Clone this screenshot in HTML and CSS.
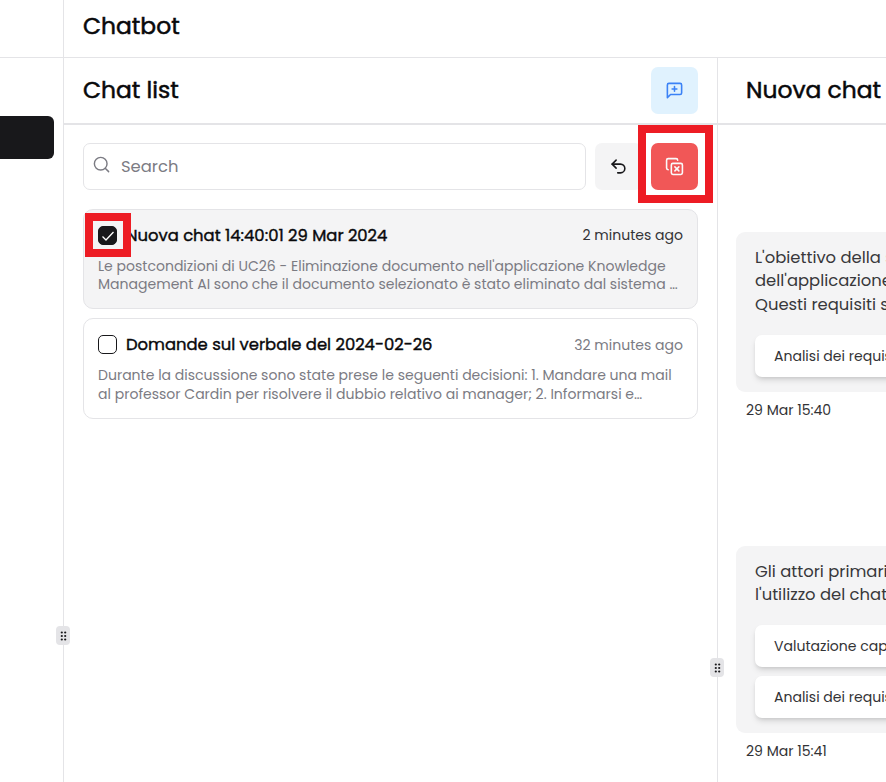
FILE: index.html
```
<!DOCTYPE html>
<html lang="it">
<head>
<meta charset="utf-8">
<title>Chatbot</title>
<link rel="stylesheet" href="styles.css">
</head>
<body>
<div class="app">
  <aside class="sidebar">
    <div class="sidebar-top"></div>
    <div class="nav-active"></div>
    <span class="handle handle-side"><svg width="7" height="10" viewBox="0 0 7 10"><g fill="#18181b"><circle cx="1.8" cy="1.5" r="1.1"/><circle cx="5.2" cy="1.5" r="1.1"/><circle cx="1.8" cy="5" r="1.1"/><circle cx="5.2" cy="5" r="1.1"/><circle cx="1.8" cy="8.5" r="1.1"/><circle cx="5.2" cy="8.5" r="1.1"/></g></svg></span>
  </aside>
  <main class="main">
    <header class="topbar"><h1 class="heading">Chatbot</h1></header>
    <div class="panels">
      <section class="list-panel">
        <div class="panel-head">
          <h2 class="heading">Chat list</h2>
          <button class="btn btn-new"><svg class="icon" viewBox="0 0 24 24"><path d="M21 15a2 2 0 0 1-2 2H7l-4 4V5a2 2 0 0 1 2-2h14a2 2 0 0 1 2 2z"/><path d="M12 7v6M9 10h6"/></svg></button>
        </div>
        <div class="list-body">
          <div class="tools">
            <div class="search"><svg class="icon" viewBox="0 0 24 24"><circle cx="11" cy="11" r="8"/><path d="m21 21-4.3-4.3"/></svg><span>Search</span></div>
            <button class="btn btn-undo"><svg class="icon" viewBox="0 0 24 24"><path d="M9 14 4 9l5-5"/><path d="M4 9h10.500a5.500 5.500 0 0 1 0 11H11"/></svg></button>
            <div class="marked">
              <button class="btn btn-delete"><svg class="icon" viewBox="0 0 24 24"><path d="m12.500 12.500 5 5M12.500 17.500l5-5"/><rect x="8" y="8" width="14" height="14" rx="2"/><path d="M4 16c-1.100 0-2-.9-2-2V4c0-1.100.9-2 2-2h10c1.100 0 2 .9 2 2"/></svg></button>
              <span class="frame frame-delete"></span>
            </div>
          </div>
          <article class="card selected">
            <div class="card-head">
              <div class="marked">
                <span class="check on"><svg width="14" height="14" viewBox="0 0 14 14"><path d="M1.500 7.500 5 11 12.500 3" fill="none" stroke="#fff" stroke-width="1.300"/></svg></span>
                <span class="frame frame-check"></span>
              </div>
              <h3 class="title">Nuova chat 14:40:01 29 Mar 2024</h3>
              <time class="date">2 minutes ago</time>
            </div>
            <p class="desc">Le postcondizioni di UC26 - Eliminazione documento nell'applicazione Knowledge<br>Management AI sono che il documento selezionato è stato eliminato dal sistema …</p>
          </article>
          <article class="card">
            <div class="card-head">
              <span class="check"></span>
              <h3 class="title">Domande sul verbale del 2024-02-26</h3>
              <time class="date">32 minutes ago</time>
            </div>
            <p class="desc">Durante la discussione sono state prese le seguenti decisioni: 1. Mandare una mail<br>al professor Cardin per risolvere il dubbio relativo ai manager; 2. Informarsi e…</p>
          </article>
        </div>
        <span class="handle handle-list"><svg width="7" height="10" viewBox="0 0 7 10"><g fill="#18181b"><circle cx="1.8" cy="1.5" r="1.1"/><circle cx="5.2" cy="1.5" r="1.1"/><circle cx="1.8" cy="5" r="1.1"/><circle cx="5.2" cy="5" r="1.1"/><circle cx="1.8" cy="8.5" r="1.1"/><circle cx="5.2" cy="8.5" r="1.1"/></g></svg></span>
      </section>
      <section class="chat-panel">
        <div class="panel-head chat-head"><h2 class="heading">Nuova chat</h2></div>
        <div class="messages">
          <div class="message">
            <div class="bubble">
              <p class="text">L'obiettivo della s<br>dell'applicazione<br>Questi requisiti s</p>
              <div class="source">Analisi dei requis</div>
            </div>
            <time class="stamp">29 Mar 15:40</time>
          </div>
          <div class="message">
            <div class="bubble">
              <p class="text">Gli attori primari<br>l'utilizzo del chat</p>
              <div class="source">Valutazione cap</div>
              <div class="source">Analisi dei requis</div>
            </div>
            <time class="stamp">29 Mar 15:41</time>
          </div>
        </div>
      </section>
    </div>
  </main>
</div>
</body>
</html>
```
FILE: styles.css
```
* { box-sizing: border-box; }
body { margin: 0; height: 782px; overflow: hidden; background: #fff; color: #09090b; font-family: Poppins, Inter, "Open Sans", sans-serif; }
h1, h2, h3, p { margin: 0; }
.app { display: flex; height: 782px; width: 886px; overflow: hidden; }
.sidebar { position: relative; flex: 0 0 64px; border-right: 1px solid #e4e4e7; }
.sidebar-top { height: 58px; border-bottom: 1px solid #e4e4e7; }
.nav-active { height: 43px; width: 54px; margin-top: 58px; background: #18181b; border-radius: 0 6px 6px 0; }
.main { flex: 1; min-width: 0; display: flex; flex-direction: column; }
.topbar { height: 58px; padding: 0 19px 4px; border-bottom: 1px solid #e4e4e7; display: flex; align-items: center; }
.heading { font-size: 23.4px; line-height: 32px; padding-bottom: 2px; font-weight: 400; -webkit-text-stroke: .5px currentColor; white-space: nowrap; }
.panels { flex: 1; display: flex; min-height: 0; }
.list-panel { position: relative; flex: 0 0 654px; width: 654px; min-width: 0; border-right: 1px solid #e4e4e7; }
.panel-head { height: 67px; padding: 0 19px; border-bottom: 2px solid #e4e4e7; display: flex; align-items: center; justify-content: space-between; }
.btn { flex: none; width: 47px; height: 47px; padding: 0; border: 0; border-radius: 7px; display: flex; align-items: center; justify-content: center; }
.icon { flex: none; width: 19px; height: 19px; fill: none; stroke: currentColor; stroke-width: 2; stroke-linecap: round; stroke-linejoin: round; }
.btn-new { background: #e0f2fe; color: #3b82f6; }
.btn-undo { background: #f4f4f5; color: #18181b; }
.btn-delete { background: #f15757; color: #fafafa; }
.list-body { padding: 18px 19px; }
.tools { display: flex; gap: 9px; margin-bottom: 19px; }
.search { flex: 1; height: 47px; border: 1px solid #e4e4e7; border-radius: 7px; display: flex; align-items: center; padding-left: 8px; gap: 10px; color: #7b7b83; font-size: 16.4px; }
.search .icon { margin-top: -4px; stroke-width: 1.8; }
.marked { position: relative; display: flex; }
.frame { position: absolute; border: 8px solid #ed1c24; z-index: 2; }
.frame-delete { left: -13px; top: -18px; width: 75px; height: 78px; }
.frame-check { left: -13px; top: -13px; width: 46px; height: 44px; }
.card { height: 100px; border: 1px solid #e4e4e7; border-radius: 10px; padding: 15px 14px; margin-bottom: 9px; }
.card + .card { height: 101px; }
.selected { background: #f4f4f5; }
.card-head { display: flex; align-items: center; height: 21px; }
.check { width: 19px; height: 19px; border: 1px solid #18181b; border-radius: 5px; flex: none; display: flex; align-items: center; justify-content: center; }
.on { background: #18181b; }
.title { font-size: 16.4px; line-height: 21px; font-weight: 400; -webkit-text-stroke: .4px currentColor; margin-left: 9px; white-space: nowrap; }
.date { margin-left: auto; font-size: 14.04px; color: #7b7b83; white-space: nowrap; }
.card:not(.selected) .date { padding-top: 1px; }
.selected .date { color: #333336; }
.desc { margin-top: 11px; font-size: 14.04px; line-height: 18.5px; color: #7b7b83; white-space: nowrap; }
.selected .desc { line-height: 18.2px; }
.handle { position: absolute; width: 14px; height: 19px; border-radius: 4px; background: #e4e4e7; display: flex; align-items: center; justify-content: center; z-index: 1; }
.handle-side { right: -7px; top: 626px; }
.handle-list { right: -7px; top: 600px; }
.chat-panel { flex: 1; min-width: 0; overflow: hidden; }
.chat-head { padding-right: 0; padding-left: 28px; }
.messages { padding: 107px 0 0 18px; }
.message + .message { margin-top: 126px; }
.bubble { margin-right: -30px; padding: 14px 19px 15px; border-radius: 9px; background: #f4f4f5; }
.text { font-size: 16.4px; line-height: 23.4px; color: #38383b; white-space: nowrap; margin-bottom: 18.4px; }
.source { height: 42px; line-height: 42px; margin-right: -30px; padding-left: 19px; border-radius: 7px; background: #fff; color: #333336; font-size: 14.04px; white-space: nowrap; box-shadow: 0 4px 6px -1px rgb(0 0 0 / .13), 0 2px 4px -2px rgb(0 0 0 / .13); }
.source + .source { margin-top: 9.6px; }
.stamp { display: block; margin: 8px 0 0 10px; font-size: 14.04px; line-height: 20px; color: #333336; }
```
